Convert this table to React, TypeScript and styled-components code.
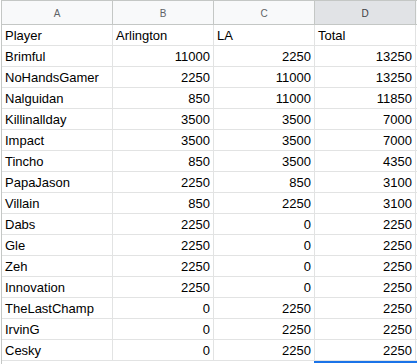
import * as React from "react"
import styled, { createGlobalStyle } from "styled-components"

const GlobalStyle = createGlobalStyle`
  html, body {
    margin: 0;
    padding: 0;
    background: #ffffff;
  }
  body {
    font-family: "Liberation Sans", Arial, sans-serif;
    overflow: hidden;
  }
`

const Sheet = styled.div`
  margin-left: 1px;
  border-left: 1px solid #c4c7c5;
  border-top: 1px solid #c4c7c5;
  width: 416px;
`

const Row = styled.div`
  display: grid;
  grid-template-columns: 111px 101px 101px 101px 1fr;
`

const HeadCell = styled.div<{ $selected?: boolean }>`
  height: 23px;
  border-right: 1px solid #c4c7c5;
  border-bottom: 1px solid #c4c7c5;
  background: ${(p) => (p.$selected ? "#e1e3e6" : "#f8f9fa")};
  color: ${(p) => (p.$selected ? "#3c4043" : "#5f6368")};
  font-size: 10px;
  display: flex;
  align-items: center;
  justify-content: center;
  padding-top: 1px;
  box-sizing: border-box;
  height: 24px;
`

const Cell = styled.div<{ $num?: boolean }>`
  height: 21px;
  box-sizing: border-box;
  border-right: 1px solid #e2e3e3;
  border-bottom: 1px solid #e2e3e3;
  font-size: 13px;
  color: #000000;
  display: flex;
  align-items: center;
  justify-content: ${(p) => (p.$num ? "flex-end" : "flex-start")};
  padding: 1px 3px 0 3px;
  white-space: nowrap;
  overflow: hidden;
`

const Blank = styled.div`
  height: 21px;
  box-sizing: border-box;
  border-bottom: 1px solid #e2e3e3;
`

const SelectionTop = styled.div`
  height: 3px;
  margin-left: -1px;
  border-top: 2px solid #1a73e8;
  box-sizing: border-box;
`

const rows: [string, number, number, number][] = [
  ["Brimful", 11000, 2250, 13250],
  ["NoHandsGamer", 2250, 11000, 13250],
  ["Nalguidan", 850, 11000, 11850],
  ["Killinallday", 3500, 3500, 7000],
  ["Impact", 3500, 3500, 7000],
  ["Tincho", 850, 3500, 4350],
  ["PapaJason", 2250, 850, 3100],
  ["Villain", 850, 2250, 3100],
  ["Dabs", 2250, 0, 2250],
  ["Gle", 2250, 0, 2250],
  ["Zeh", 2250, 0, 2250],
  ["Innovation", 2250, 0, 2250],
  ["TheLastChamp", 0, 2250, 2250],
  ["IrvinG", 0, 2250, 2250],
  ["Cesky", 0, 2250, 2250],
]

export default function App() {
  return (
    <>
      <GlobalStyle />
      <Sheet>
        <Row>
          <HeadCell>A</HeadCell>
          <HeadCell>B</HeadCell>
          <HeadCell>C</HeadCell>
          <HeadCell $selected>D</HeadCell>
          <HeadCell />
        </Row>
        <Row>
          <Cell>Player</Cell>
          <Cell>Arlington</Cell>
          <Cell>LA</Cell>
          <Cell>Total</Cell>
          <Blank />
        </Row>
        {rows.map(([name, arl, la, total]) => (
          <Row key={name}>
            <Cell>{name}</Cell>
            <Cell $num>{arl}</Cell>
            <Cell $num>{la}</Cell>
            <Cell $num>{total}</Cell>
            <Blank />
          </Row>
        ))}
        <Row>
          <div />
          <div />
          <div />
          <SelectionTop />
          <SelectionTop />
        </Row>
      </Sheet>
    </>
  )
}
